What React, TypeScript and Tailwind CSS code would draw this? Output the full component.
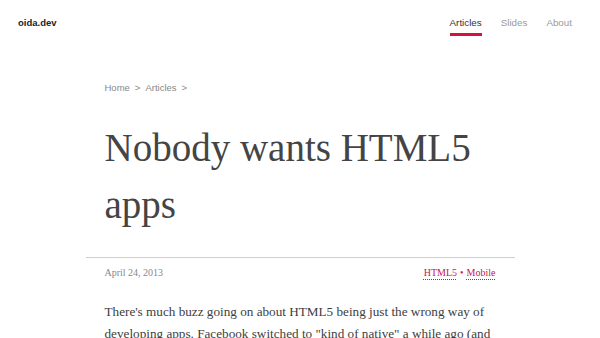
const NAV = [
  { label: "Articles", active: true },
  { label: "Slides", active: false },
  { label: "About", active: false },
];

export default function App() {
  return (
    <div className="min-h-screen bg-white" style={{ fontFamily: '"Liberation Sans", Arial, sans-serif' }}>
      {/* header */}
      <header className="flex items-start justify-between pl-[18px] pr-[28px] pt-[17px]">
        <a className="text-[9.5px] leading-[12px] font-bold text-[#222]">oida.dev</a>
        <nav className="flex gap-[19px]">
          {NAV.map((n) => (
            <a
              key={n.label}
              className={
                n.active
                  ? "text-[9.8px] leading-[12px] pb-[4px] border-b-[3px] border-[#d3123d] text-[#333]"
                  : "text-[9.8px] leading-[12px] pb-[4px] border-b-[3px] border-transparent text-[#9a9a9a]"
              }
            >
              {n.label}
            </a>
          ))}
        </nav>
      </header>

      <main className="mx-auto w-[429px] mt-[46px]">
        {/* breadcrumb */}
        <div className="px-[19px] text-[9.5px] leading-[12px] text-[#888]">
          <span>Home</span>
          <span className="mx-[5px]">&gt;</span>
          <span>Articles</span>
          <span className="mx-[5px]">&gt;</span>
        </div>

        <h1
          className="px-[19px] mt-[25px] text-[39px] leading-[57px] text-[#444]"
          style={{ fontFamily: '"Liberation Serif", "Times New Roman", serif' }}
        >
          Nobody wants HTML5 apps
        </h1>

        <hr className="mt-[24px] border-0 border-t border-[#cfcfcf]" />

        <div
          className="px-[19px] mt-[8px] flex justify-between text-[10px] leading-[14px]"
          style={{ fontFamily: '"Liberation Serif", "Times New Roman", serif' }}
        >
          <span className="text-[#888]">April 24, 2013</span>
          <span className="text-[#c8164a]">
            <a className="underline decoration-dotted underline-offset-[3px]">HTML5</a>
            <span className="mx-[3px]">•</span>
            <a className="underline decoration-dotted underline-offset-[3px]">Mobile</a>
          </span>
        </div>

        <article
          className="px-[19px] mt-[21px] text-[13.2px] leading-[21.5px] text-[#404040]"
          style={{ fontFamily: '"Liberation Serif", "Times New Roman", serif' }}
        >
          <p>
            There's much buzz going on about HTML5 being just the wrong way of developing apps. Facebook switched
            to "kind of native" a while ago (and everybody seems to agree that web technologies just are not ready
            for serious app development yet.
          </p>
        </article>
      </main>
    </div>
  );
}
